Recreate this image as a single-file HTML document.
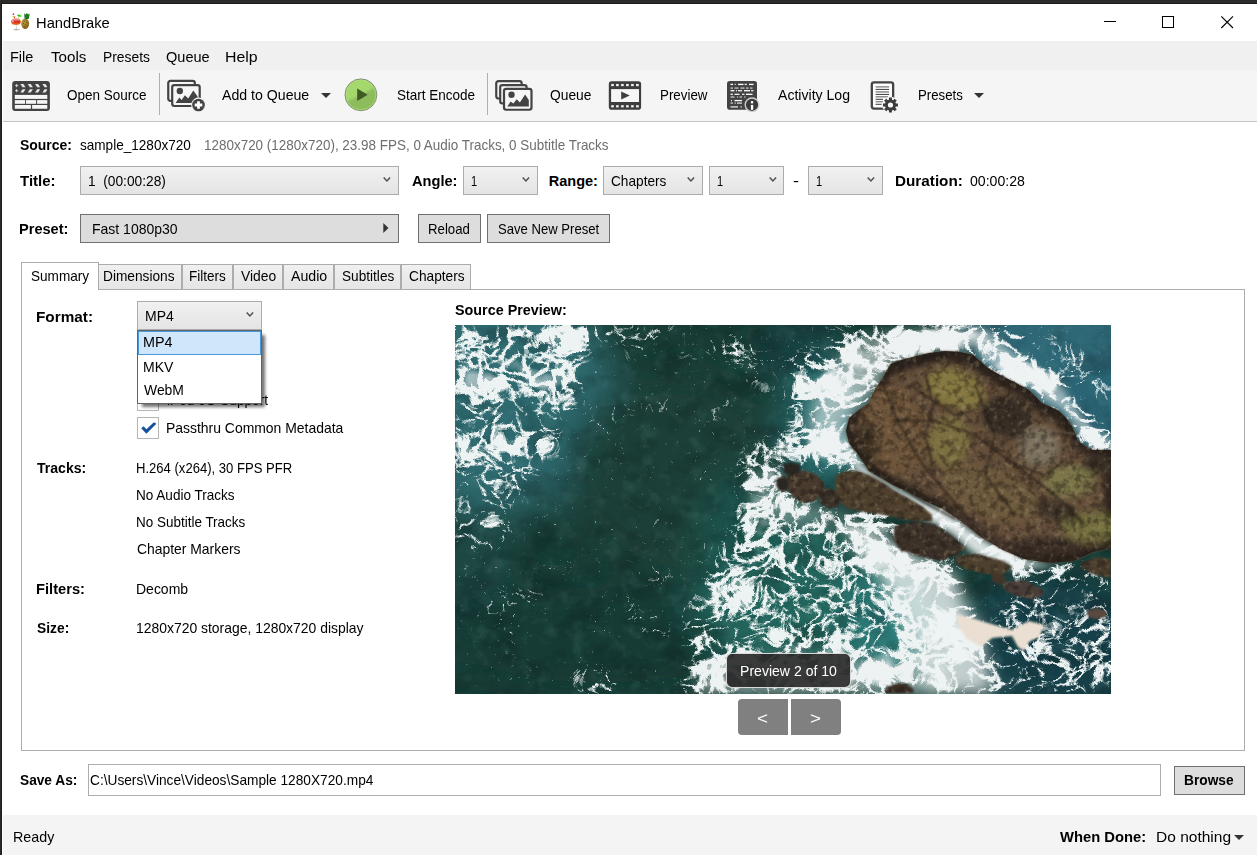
<!DOCTYPE html>
<html lang="en"><head><meta charset="utf-8"><title>HandBrake</title>
<style>
html,body{margin:0;padding:0;}
body{width:1257px;height:855px;overflow:hidden;background:#fff;font-family:"Liberation Sans",sans-serif;font-size:14.5px;color:#000;position:relative;}
.a{position:absolute;}
.t{position:absolute;white-space:nowrap;line-height:20px;transform-origin:0 50%;}
.combo{position:absolute;box-sizing:border-box;border:1px solid #acacac;background:linear-gradient(#f1f1f1,#e4e4e4);}
.btn{position:absolute;box-sizing:border-box;border:1px solid #707070;background:#dddddd;}
.tab{position:absolute;box-sizing:border-box;border:1px solid #acacac;border-bottom:none;background:linear-gradient(#f0f0f0,#e5e5e5);top:264px;height:25px;}
svg{position:absolute;overflow:visible;}
</style></head>
<body>
<div class="a" style="left:0;top:0;width:1257px;height:3px;background:#2b2a28"></div>
<div class="a" style="left:1px;top:3px;width:1256px;height:1px;background:#1c1b1a"></div>
<div class="a" style="left:0;top:0;width:1px;height:855px;background:#2b2a28"></div>
<div class="a" style="left:1px;top:3px;width:1px;height:852px;background:#1c1b1a"></div>
<div class="a" style="left:3px;top:41px;width:1254px;height:29px;background:#f0f0f0"></div>
<div class="a" style="left:3px;top:70px;width:1254px;height:51px;background:#f5f5f5"></div>
<div class="a" style="left:3px;top:121px;width:1254px;height:1px;background:#c4c4c4"></div>
<div class="a" style="left:3px;top:815px;width:1254px;height:40px;background:#f4f4f4"></div>
<svg style="left:10px;top:12px" width="22" height="20" viewBox="0 0 22 20">
<defs><linearGradient id="lgc" x1="0" y1="0" x2="0" y2="1"><stop offset="0" stop-color="#d9463a"/><stop offset="0.55" stop-color="#d8281c"/><stop offset="1" stop-color="#f08a1c"/></linearGradient>
<radialGradient id="lgp" cx="0.4" cy="0.4" r="0.7"><stop offset="0" stop-color="#c09a3a"/><stop offset="1" stop-color="#7d5a17"/></radialGradient></defs>
<ellipse cx="6.6" cy="17.6" rx="3.4" ry="0.9" fill="#c9c9c9"/>
<ellipse cx="6.3" cy="17.5" rx="1.1" ry="0.4" fill="#7a7a7a"/>
<rect x="6" y="12.6" width="0.9" height="4.8" fill="#d6d6d6"/>
<ellipse cx="6" cy="9.75" rx="4.75" ry="3.3" fill="url(#lgc)"/>
<ellipse cx="6" cy="7.6" rx="4.2" ry="1" fill="#e9b9b4" opacity="0.7"/>
<ellipse cx="2.9" cy="9.3" rx="0.9" ry="1.4" fill="#fff" opacity="0.55"/>
<rect x="8.2" y="5" width="0.5" height="2.6" fill="#d8b45a"/>
<ellipse cx="9.3" cy="3.7" rx="2.3" ry="1" fill="#2fcf10" transform="rotate(14 9.3 3.7)"/>
<ellipse cx="3.9" cy="4.35" rx="1.9" ry="0.65" fill="#cfcf58"/>
<circle cx="4.4" cy="5.5" r="0.65" fill="#d8241c"/>
<circle cx="3.4" cy="2.2" r="0.85" fill="#e820b8"/>
<circle cx="10.4" cy="8.6" r="0.7" fill="#f2d820"/>
<ellipse cx="15.2" cy="11.7" rx="3.9" ry="5.2" fill="url(#lgp)"/>
<g fill="#5e4210"><circle cx="14.4" cy="9.3" r="0.5"/><circle cx="16.4" cy="10.4" r="0.5"/><circle cx="13.6" cy="11.6" r="0.5"/><circle cx="15.4" cy="12.6" r="0.5"/><circle cx="14.4" cy="14.4" r="0.5"/><circle cx="16.6" cy="13.9" r="0.45"/><circle cx="15.5" cy="15.4" r="0.4"/></g>
<polygon points="14.50,6.60 14.20,1.20 15.65,2.70 16.20,0.90 17.30,2.20 18.10,0.90 18.50,2.60 19.80,1.90 18.70,6.90 16.50,7.30" fill="#1f7a1f"/>
</svg>
<span class="t" style="left:35.77px;top:12.55px;font-size:15px;transform:scaleX(0.9819);">HandBrake</span>
<svg style="left:1104px;top:21px" width="13" height="2" viewBox="0 0 13 2"><rect x="0" y="0" width="12" height="1" fill="#000"/></svg>
<svg style="left:1162px;top:16px" width="13" height="13" viewBox="0 0 13 13"><rect x="0.5" y="0.5" width="11" height="11" fill="none" stroke="#000" stroke-width="1"/></svg>
<svg style="left:1221px;top:16px" width="13" height="13" viewBox="0 0 13 13"><path d="M0.3 0.3 L12 12 M12 0.3 L0.3 12" fill="none" stroke="#000" stroke-width="1.1"/></svg>
<span class="t" style="left:10.29px;top:46.55px;font-size:15px;transform:scaleX(0.9663);">File</span>
<span class="t" style="left:50.92px;top:46.55px;font-size:15px;transform:scaleX(1.0110);">Tools</span>
<span class="t" style="left:102.65px;top:46.55px;font-size:15px;transform:scaleX(0.9224);">Presets</span>
<span class="t" style="left:165.77px;top:46.55px;font-size:15px;transform:scaleX(0.9696);">Queue</span>
<span class="t" style="left:225.48px;top:46.55px;font-size:15px;transform:scaleX(1.0586);">Help</span>
<svg style="left:12px;top:80px" width="38" height="31" viewBox="0 0 38 31">
<clipPath id="cc"><rect x="2.8" y="2" width="32.5" height="12"/></clipPath>
<rect x="0.2" y="0.9" width="37.7" height="30" rx="3" fill="#434343"/>
<g fill="#f6f6f6"><rect x="2.8" y="14.9" width="32.5" height="4"/>
<rect x="2.8" y="20.1" width="10.3" height="3.7"/><rect x="14" y="20.1" width="10.1" height="3.7"/><rect x="25.1" y="20.1" width="10.2" height="3.7"/>
<rect x="2.8" y="25" width="16.1" height="3.75"/><rect x="20.1" y="25" width="15.2" height="3.75"/>
<g clip-path="url(#cc)" opacity="0.92"><polygon points="8.40,3.95 11.40,3.95 13.50,7.2 10.50,7.2"/><polygon points="10.50,9.3 13.50,9.3 11.40,12.4 8.40,12.4"/><polygon points="15.75,3.95 18.75,3.95 20.85,7.2 17.85,7.2"/><polygon points="17.85,9.3 20.85,9.3 18.75,12.4 15.75,12.4"/><polygon points="23.10,3.95 26.10,3.95 28.20,7.2 25.20,7.2"/><polygon points="25.20,9.3 28.20,9.3 26.10,12.4 23.10,12.4"/><polygon points="30.45,3.95 33.45,3.95 35.55,7.2 32.55,7.2"/><polygon points="32.55,9.3 35.55,9.3 33.45,12.4 30.45,12.4"/></g>
<path d="M4.65 4 V7.2 M3.05 5.6 H6.25 M4.65 9.1 V12.3 M3.05 10.7 H6.25" stroke="#f6f6f6" stroke-width="0.9" fill="none" opacity="0.85"/></g>
</svg>
<span class="t" style="left:66.92px;top:84.97px;font-size:14.5px;transform:scaleX(0.9308);">Open Source</span>
<div class="a" style="left:159px;top:73px;width:1px;height:42px;background:#a9b2ba"></div>
<svg style="left:166px;top:79px" width="40" height="33" viewBox="0 0 40 33">
<rect x="2.25" y="1.85" width="26.55" height="20.05" rx="2.2" fill="#f6f6f6" stroke="#434343" stroke-width="2.2"/>
<rect x="6.20" y="6.05" width="27.50" height="20.95" rx="2.2" fill="#f6f6f6" stroke="#434343" stroke-width="2.2"/>
<circle cx="13.80" cy="12.00" r="3.2" fill="#434343"/>
<polygon points="9.60,24.10 13.30,18.50 15.60,20.90 18.90,16.20 22.20,19.50 27.30,11.50 31.60,17.60 31.60,24.10" fill="#434343"/>
<circle cx="32.50" cy="26.00" r="7.4" fill="#f0f0f0"/>
<circle cx="32.50" cy="26.00" r="6.3" fill="#434343"/>
<path d="M32.50 22.20 V29.80 M28.70 26.00 H36.30" stroke="#fff" stroke-width="2.8" fill="none"/>
</svg>
<span class="t" style="left:222.38px;top:84.97px;font-size:14.5px;transform:scaleX(0.9746);">Add to Queue</span>
<svg style="left:321px;top:93px" width="10" height="5" viewBox="0 0 10 5"><path d="M0 0 H10 L5.0 5 Z" fill="#333"/></svg>
<svg style="left:344px;top:78px" width="34" height="34" viewBox="0 0 34 34">
<defs><clipPath id="pcl"><circle cx="16.9" cy="16.8" r="15.4"/></clipPath><filter id="pbl" x="-20%" y="-20%" width="140%" height="140%"><feGaussianBlur stdDeviation="0.8"/></filter></defs>
<circle cx="16.9" cy="16.8" r="15.9" fill="#a4d86d" stroke="#7d8a76" stroke-width="1"/>
<g clip-path="url(#pcl)"><polygon points="-2,26 36,7 36,36 -2,36" fill="#8cbc5c" filter="url(#pbl)"/></g>
<circle cx="16.9" cy="16.8" r="14.9" fill="none" stroke="#b4e284" stroke-width="0.8" opacity="0.7"/>
<polygon points="13.2,10.5 23.7,16.8 13.2,23.1" fill="#3f5a25"/>
</svg>
<span class="t" style="left:396.67px;top:84.97px;font-size:14.5px;transform:scaleX(0.9303);">Start Encode</span>
<div class="a" style="left:487px;top:73px;width:1px;height:42px;background:#a9b2ba"></div>
<svg style="left:494px;top:79px" width="40" height="33" viewBox="0 0 40 33">
<rect x="2.25" y="2.10" width="25.40" height="17.40" rx="2.2" fill="#f6f6f6" stroke="#434343" stroke-width="2.2"/>
<rect x="6.20" y="6.05" width="26.40" height="18.35" rx="2.2" fill="#f6f6f6" stroke="#434343" stroke-width="2.2"/>
<rect x="10.00" y="9.80" width="27.50" height="20.95" rx="2.2" fill="#f6f6f6" stroke="#434343" stroke-width="2.2"/>
<circle cx="17.50" cy="15.70" r="3.2" fill="#434343"/>
<polygon points="13.30,27.60 16.60,22.50 19.40,24.60 22.70,20.20 25.90,23.40 31.10,15.50 34.80,20.90 34.80,27.60" fill="#434343"/>
</svg>
<span class="t" style="left:550.15px;top:84.97px;font-size:14.5px;transform:scaleX(0.9527);">Queue</span>
<svg style="left:608px;top:80px" width="34" height="31" viewBox="0 0 34 31">
<rect x="0.8" y="1.15" width="32.3" height="28.6" rx="2.8" fill="#3e3e3e"/>
<g fill="#f6f6f6"><rect x="3.1" y="9.1" width="27.9" height="12.9"/><rect x="3.20" y="3.95" width="2.6" height="2.2"/><rect x="3.20" y="25.20" width="2.6" height="2.2"/><rect x="8.10" y="3.95" width="2.6" height="2.2"/><rect x="8.10" y="25.20" width="2.6" height="2.2"/><rect x="13.10" y="3.95" width="2.6" height="2.2"/><rect x="13.10" y="25.20" width="2.6" height="2.2"/><rect x="18.10" y="3.95" width="2.6" height="2.2"/><rect x="18.10" y="25.20" width="2.6" height="2.2"/><rect x="23.10" y="3.95" width="2.6" height="2.2"/><rect x="23.10" y="25.20" width="2.6" height="2.2"/><rect x="28.10" y="3.95" width="2.6" height="2.2"/><rect x="28.10" y="25.20" width="2.6" height="2.2"/></g>
<polygon points="13.2,11.4 21.8,15.4 13.2,19.6" fill="#3e3e3e"/>
</svg>
<span class="t" style="left:660.46px;top:84.97px;font-size:14.5px;transform:scaleX(0.9208);">Preview</span>
<svg style="left:726px;top:80px" width="34" height="32" viewBox="0 0 34 32">
<rect x="1" y="0.9" width="30" height="28.8" rx="2.8" fill="#434343"/>
<g fill="#fff"><rect x="4.50" y="3.75" width="2.50" height="1.3" opacity="1"/><rect x="8.50" y="3.75" width="1.50" height="1.3" opacity="0.6"/><rect x="12.00" y="3.75" width="5.50" height="1.3" opacity="1"/><rect x="18.50" y="3.75" width="2.50" height="1.3" opacity="0.8"/><rect x="23.00" y="3.75" width="4.50" height="1.3" opacity="1"/><rect x="4.50" y="7.45" width="2.50" height="1.3" opacity="0.7"/><rect x="8.50" y="7.45" width="4.00" height="1.3" opacity="0.7"/><rect x="14.50" y="7.45" width="4.00" height="1.3" opacity="0.7"/><rect x="20.00" y="7.45" width="2.50" height="1.3" opacity="0.7"/><rect x="24.00" y="7.45" width="2.50" height="1.3" opacity="0.7"/><rect x="4.50" y="10.05" width="4.00" height="1.3" opacity="1"/><rect x="10.00" y="10.05" width="1.00" height="1.3" opacity="0.9"/><rect x="12.00" y="10.05" width="4.00" height="1.3" opacity="0.9"/><rect x="18.00" y="10.05" width="6.00" height="1.3" opacity="1"/><rect x="25.00" y="10.05" width="2.50" height="1.3" opacity="0.9"/><rect x="4.50" y="13.65" width="2.50" height="1.3" opacity="0.9"/><rect x="8.50" y="13.65" width="5.00" height="1.3" opacity="0.9"/><rect x="16.00" y="13.65" width="2.50" height="1.3" opacity="0.9"/><rect x="20.00" y="13.65" width="6.50" height="1.3" opacity="1"/><rect x="4.50" y="16.35" width="4.00" height="1.3" opacity="0.7"/><rect x="11.00" y="16.35" width="1.00" height="1.3" opacity="0.7"/><rect x="13.50" y="16.35" width="2.50" height="1.3" opacity="0.7"/><rect x="18.00" y="16.35" width="1.50" height="1.3" opacity="0.6"/><rect x="5.00" y="19.95" width="1.00" height="1.3" opacity="0.9"/><rect x="8.50" y="19.95" width="7.50" height="1.3" opacity="1"/><rect x="4.50" y="22.45" width="2.50" height="1.3" opacity="0.7"/><rect x="8.50" y="22.45" width="1.50" height="1.3" opacity="0.6"/><rect x="11.00" y="22.45" width="5.00" height="1.3" opacity="0.8"/><rect x="4.50" y="26.25" width="7.50" height="1.3" opacity="0.85"/><rect x="14.50" y="26.25" width="1.30" height="1.3" opacity="0.8"/></g>
<circle cx="26" cy="24.8" r="7.5" fill="#cfcfcf"/>
<circle cx="26" cy="24.8" r="6.1" fill="#3a3a3a"/>
<rect x="24.9" y="21.1" width="2.3" height="2.3" fill="#fff"/><rect x="24.9" y="24.9" width="2.3" height="4.9" fill="#fff"/>
</svg>
<span class="t" style="left:778.38px;top:84.97px;font-size:14.5px;transform:scaleX(0.9709);">Activity Log</span>
<svg style="left:870px;top:80px" width="30" height="34" viewBox="0 0 30 34">
<rect x="1.80" y="2.30" width="21.35" height="26.25" rx="2.2" fill="#fdfdfd" stroke="#434343" stroke-width="2.3"/>
<rect x="5.60" y="6.10" width="13.50" height="1.5" fill="#8d8d8d"/><rect x="5.60" y="8.90" width="13.50" height="1.0" fill="#3a3a3a"/><rect x="5.60" y="11.15" width="13.50" height="1.5" fill="#8d8d8d"/><rect x="5.60" y="13.90" width="13.50" height="1.0" fill="#3a3a3a"/><rect x="5.60" y="16.05" width="12.40" height="1.5" fill="#8d8d8d"/><rect x="5.60" y="18.80" width="7.40" height="1.0" fill="#3a3a3a"/><rect x="5.60" y="20.95" width="7.40" height="1.5" fill="#8d8d8d"/><rect x="5.60" y="23.80" width="6.00" height="1.0" fill="#3a3a3a"/>
<circle cx="20.45" cy="25.00" r="8.3" fill="#f5f5f5"/>
<g fill="#3c3c3c"><circle cx="20.45" cy="25.00" r="5.6"/><rect x="18.95" y="17.50" width="3" height="4" transform="rotate(0 20.45 25.00)"/><rect x="18.95" y="17.50" width="3" height="4" transform="rotate(45 20.45 25.00)"/><rect x="18.95" y="17.50" width="3" height="4" transform="rotate(90 20.45 25.00)"/><rect x="18.95" y="17.50" width="3" height="4" transform="rotate(135 20.45 25.00)"/><rect x="18.95" y="17.50" width="3" height="4" transform="rotate(180 20.45 25.00)"/><rect x="18.95" y="17.50" width="3" height="4" transform="rotate(225 20.45 25.00)"/><rect x="18.95" y="17.50" width="3" height="4" transform="rotate(270 20.45 25.00)"/><rect x="18.95" y="17.50" width="3" height="4" transform="rotate(315 20.45 25.00)"/></g>
<circle cx="20.45" cy="25.00" r="2.6" fill="#fafafa"/>
</svg>
<span class="t" style="left:918.37px;top:84.97px;font-size:14.5px;transform:scaleX(0.9116);">Presets</span>
<svg style="left:974px;top:93px" width="10" height="5" viewBox="0 0 10 5"><path d="M0 0 H10 L5.0 5 Z" fill="#333"/></svg>
<span class="t" style="left:20.14px;top:134.97px;font-size:14.5px;transform:scaleX(0.9617);font-weight:700;">Source:</span>
<span class="t" style="left:80.15px;top:134.97px;font-size:14.5px;transform:scaleX(0.9352);">sample_1280x720</span>
<span class="t" style="left:204.46px;top:134.97px;font-size:14.5px;transform:scaleX(0.9277);color:#6e6e6e;">1280x720 (1280x720), 23.98 FPS, 0 Audio Tracks, 0 Subtitle Tracks</span>
<span class="t" style="left:20.37px;top:170.72px;font-size:14.5px;transform:scaleX(1.0342);font-weight:700;">Title:</span>
<div class="combo" style="left:80px;top:166px;width:319px;height:29px"></div>
<span class="t" style="left:88.43px;top:170.72px;font-size:14.5px;transform:scaleX(0.9470);white-space:pre;">1  (00:00:28)</span>
<svg style="left:383.1px;top:177px" width="9" height="6" viewBox="0 0 9 6"><path d="M0.7 0.6 L3.9 4.0 L7.1 0.6" fill="none" stroke="#505050" stroke-width="1.5"/></svg>
<span class="t" style="left:411.62px;top:170.72px;font-size:14.5px;transform:scaleX(1.0086);font-weight:700;">Angle:</span>
<div class="combo" style="left:463px;top:166px;width:75px;height:29px"></div>
<span class="t" style="left:471.39px;top:170.72px;font-size:14.5px;transform:scaleX(0.7600);">1</span>
<svg style="left:521.9px;top:177px" width="9" height="6" viewBox="0 0 9 6"><path d="M0.7 0.6 L3.9 4.0 L7.1 0.6" fill="none" stroke="#505050" stroke-width="1.5"/></svg>
<span class="t" style="left:548.75px;top:170.72px;font-size:14.5px;transform:scaleX(1.0000);font-weight:700;">Range:</span>
<div class="combo" style="left:603px;top:166px;width:100px;height:29px"></div>
<span class="t" style="left:610.54px;top:170.72px;font-size:14.5px;transform:scaleX(0.9414);">Chapters</span>
<svg style="left:686.6px;top:177px" width="9" height="6" viewBox="0 0 9 6"><path d="M0.7 0.6 L3.9 4.0 L7.1 0.6" fill="none" stroke="#505050" stroke-width="1.5"/></svg>
<div class="combo" style="left:709px;top:166px;width:75px;height:29px"></div>
<span class="t" style="left:717.39px;top:170.72px;font-size:14.5px;transform:scaleX(0.7600);">1</span>
<svg style="left:768.6px;top:177px" width="9" height="6" viewBox="0 0 9 6"><path d="M0.7 0.6 L3.9 4.0 L7.1 0.6" fill="none" stroke="#505050" stroke-width="1.5"/></svg>
<span class="t" style="left:792.97px;top:170.72px;font-size:14.5px;transform:scaleX(1.2414);">-</span>
<div class="combo" style="left:808px;top:166px;width:75px;height:29px"></div>
<span class="t" style="left:816.39px;top:170.72px;font-size:14.5px;transform:scaleX(0.7600);">1</span>
<svg style="left:867.3000000000001px;top:177px" width="9" height="6" viewBox="0 0 9 6"><path d="M0.7 0.6 L3.9 4.0 L7.1 0.6" fill="none" stroke="#505050" stroke-width="1.5"/></svg>
<span class="t" style="left:894.65px;top:170.72px;font-size:14.5px;transform:scaleX(1.0532);font-weight:700;">Duration:</span>
<span class="t" style="left:970.41px;top:170.72px;font-size:14.5px;transform:scaleX(0.9734);">00:00:28</span>
<span class="t" style="left:19.49px;top:218.72px;font-size:14.5px;transform:scaleX(1.0053);font-weight:700;">Preset:</span>
<div class="btn" style="left:80px;top:214px;width:319px;height:29px"></div>
<span class="t" style="left:92.41px;top:218.72px;font-size:14.5px;transform:scaleX(0.9655);">Fast 1080p30</span>
<svg style="left:383px;top:223px" width="6" height="10" viewBox="0 0 6 10"><path d="M0.3 0 L5.5 5 L0.3 10 Z" fill="#333"/></svg>
<div class="btn" style="left:418px;top:214px;width:63px;height:29px"></div>
<span class="t" style="left:428.47px;top:218.72px;font-size:14.5px;transform:scaleX(0.9117);">Reload</span>
<div class="btn" style="left:487px;top:214px;width:123px;height:29px"></div>
<span class="t" style="left:497.94px;top:218.72px;font-size:14.5px;transform:scaleX(0.9034);">Save New Preset</span>
<div class="a" style="left:21px;top:289px;width:1224px;height:462px;box-sizing:border-box;border:1px solid #acacac;background:#fff"></div>
<div class="tab" style="left:97px;width:85px"></div>
<span class="t" style="left:103.44px;top:266.22px;font-size:14.5px;transform:scaleX(0.9444);">Dimensions</span>
<div class="tab" style="left:182px;width:51px"></div>
<span class="t" style="left:189.45px;top:266.22px;font-size:14.5px;transform:scaleX(0.9307);">Filters</span>
<div class="tab" style="left:233px;width:50px"></div>
<span class="t" style="left:241.13px;top:266.22px;font-size:14.5px;transform:scaleX(0.9550);">Video</span>
<div class="tab" style="left:283px;width:51px"></div>
<span class="t" style="left:291.13px;top:266.22px;font-size:14.5px;transform:scaleX(0.9759);">Audio</span>
<div class="tab" style="left:334px;width:67px"></div>
<span class="t" style="left:341.91px;top:266.22px;font-size:14.5px;transform:scaleX(0.9404);">Subtitles</span>
<div class="tab" style="left:401px;width:70px"></div>
<span class="t" style="left:408.54px;top:266.22px;font-size:14.5px;transform:scaleX(0.9458);">Chapters</span>
<div class="a" style="left:21px;top:262px;width:78px;height:28px;box-sizing:border-box;border:1px solid #acacac;border-bottom:none;background:#fff"></div>
<span class="t" style="left:30.66px;top:266.22px;font-size:14.5px;transform:scaleX(0.9369);">Summary</span>
<span class="t" style="left:36.44px;top:306.97px;font-size:14.5px;transform:scaleX(1.0557);font-weight:700;">Format:</span>
<div class="combo" style="left:137px;top:301px;width:125px;height:29px"></div>
<span class="t" style="left:144.66px;top:306.22px;font-size:14.5px;transform:scaleX(0.9646);">MP4</span>
<svg style="left:246.29999999999998px;top:312.3px" width="9" height="6" viewBox="0 0 9 6"><path d="M0.7 0.6 L3.9 4.0 L7.1 0.6" fill="none" stroke="#505050" stroke-width="1.5"/></svg>
<div class="a" style="left:137px;top:389px;width:22px;height:22px;box-sizing:border-box;border:1px solid #b5b5b5;background:#fff"></div>
<span class="t" style="left:166.56px;top:390.47px;font-size:14.5px;transform:scaleX(0.9423);">iPod 5G Support</span>
<div class="a" style="left:137px;top:330px;width:125px;height:74px;box-sizing:border-box;border:1px solid #646464;background:#fff;box-shadow:4px 4px 3px -1px rgba(0,0,0,0.55)"></div>
<div class="a" style="left:138px;top:331px;width:123px;height:24px;box-sizing:border-box;border:1px solid #4a98e0;background:#cfe6fb"></div>
<span class="t" style="left:143.38px;top:332.47px;font-size:14.5px;transform:scaleX(0.9912);">MP4</span>
<span class="t" style="left:143.41px;top:356.72px;font-size:14.5px;transform:scaleX(0.9669);">MKV</span>
<span class="t" style="left:144.38px;top:380.47px;font-size:14.5px;transform:scaleX(0.9598);">WebM</span>
<div class="a" style="left:137px;top:417px;width:22px;height:22px;box-sizing:border-box;border:1px solid #b5b5b5;background:#fff"></div>
<svg style="left:141px;top:422px" width="16" height="12" viewBox="0 0 16 12"><path d="M0.2 6.3 L5.4 11.7 L15.4 1.7 L12.9 0.2 L5.4 7.2 L2.6 4.2 Z" fill="#14539c"/></svg>
<span class="t" style="left:166.42px;top:418.22px;font-size:14.5px;transform:scaleX(0.9605);">Passthru Common Metadata</span>
<span class="t" style="left:36.88px;top:458.17px;font-size:14.5px;transform:scaleX(0.9706);font-weight:700;">Tracks:</span>
<span class="t" style="left:136.49px;top:458.17px;font-size:14.5px;transform:scaleX(0.9015);">H.264 (x264), 30 FPS PFR</span>
<span class="t" style="left:136.45px;top:485.27px;font-size:14.5px;transform:scaleX(0.9343);">No Audio Tracks</span>
<span class="t" style="left:136.45px;top:512.37px;font-size:14.5px;transform:scaleX(0.9290);">No Subtitle Tracks</span>
<span class="t" style="left:136.78px;top:539.17px;font-size:14.5px;transform:scaleX(0.9583);">Chapter Markers</span>
<span class="t" style="left:35.99px;top:579.17px;font-size:14.5px;transform:scaleX(1.0130);font-weight:700;">Filters:</span>
<span class="t" style="left:136.41px;top:579.17px;font-size:14.5px;transform:scaleX(0.9646);">Decomb</span>
<span class="t" style="left:36.64px;top:617.77px;font-size:14.5px;transform:scaleX(0.9525);font-weight:700;">Size:</span>
<span class="t" style="left:136.42px;top:617.77px;font-size:14.5px;transform:scaleX(0.9598);">1280x720 storage, 1280x720 display</span>
<span class="t" style="left:454.63px;top:299.97px;font-size:14.5px;transform:scaleX(0.9899);font-weight:700;">Source Preview:</span>
<svg style="left:455px;top:325px" width="656" height="369" viewBox="0 0 656 369">
<defs>
<clipPath id="pc"><rect x="0" y="0" width="656" height="369"/></clipPath>
<filter id="b20" x="-30%" y="-30%" width="160%" height="160%"><feGaussianBlur stdDeviation="18"/></filter>
<filter id="b10" x="-30%" y="-30%" width="160%" height="160%"><feGaussianBlur stdDeviation="8"/></filter>
<filter id="b4" x="-30%" y="-30%" width="160%" height="160%"><feGaussianBlur stdDeviation="3.5"/></filter>
<filter id="b2" x="-10%" y="-10%" width="120%" height="120%"><feGaussianBlur stdDeviation="1.3"/></filter>
<filter id="foam" filterUnits="userSpaceOnUse" x="-50" y="-50" width="756" height="469" color-interpolation-filters="sRGB">
  <feGaussianBlur in="SourceAlpha" stdDeviation="6" result="d"/>
  <feTurbulence type="fractalNoise" baseFrequency="0.022 0.028" numOctaves="3" seed="2" result="lo"/>
  <feColorMatrix in="lo" type="matrix" values="0 0 0 0 0  0 0 0 0 0  0 0 0 0 0  1.8 0 0 0 -0.4" result="m"/>
  <feComposite in="d" in2="m" operator="arithmetic" k1="0.8" k2="0.5" k3="0" k4="0" result="dm"/>
  <feTurbulence type="turbulence" baseFrequency="0.07 0.085" numOctaves="5" seed="4" result="n0"/>
  <feTurbulence type="fractalNoise" baseFrequency="0.03" numOctaves="2" seed="31" result="wp"/>
  <feDisplacementMap in="n0" in2="wp" scale="26" xChannelSelector="R" yChannelSelector="G" result="n"/>
  <feColorMatrix in="n" type="matrix" values="0 0 0 0 0  0 0 0 0 0  0 0 0 0 0  -2.1 0 0 0 1" result="na"/>
  <feComposite in="dm" in2="na" operator="arithmetic" k1="0" k2="1.5" k3="1" k4="-1.0" result="c"/>
  <feComponentTransfer in="c" result="c2"><feFuncA type="linear" slope="2.6" intercept="0"/></feComponentTransfer>
  <feColorMatrix in="c2" type="matrix" values="0 0 0 0 0.93  0 0 0 0 0.95  0 0 0 0 0.95  0 0 0 1 0" result="c3"/>
  <feGaussianBlur in="c3" stdDeviation="0.4"/>
</filter>
<filter id="wtex" filterUnits="userSpaceOnUse" x="0" y="0" width="656" height="369" color-interpolation-filters="sRGB">
  <feTurbulence type="fractalNoise" baseFrequency="0.03 0.04" numOctaves="4" seed="11" result="n"/>
  <feColorMatrix in="n" type="matrix" values="0 0 0 0 0.03  0 0 0 0 0.08  0 0 0 0 0.08  -3.2 0 0 0 1.75"/>
</filter>
<filter id="wtex2" filterUnits="userSpaceOnUse" x="0" y="0" width="656" height="369" color-interpolation-filters="sRGB">
  <feTurbulence type="fractalNoise" baseFrequency="0.06" numOctaves="3" seed="23" result="n"/>
  <feColorMatrix in="n" type="matrix" values="0 0 0 0 0.40  0 0 0 0 0.62  0 0 0 0 0.60  3 0 0 0 -1.55"/>
</filter>
<filter id="rtex" filterUnits="userSpaceOnUse" x="300" y="20" width="356" height="348" color-interpolation-filters="sRGB">
  <feTurbulence type="fractalNoise" baseFrequency="0.14" numOctaves="4" seed="5" result="n"/>
  <feColorMatrix in="n" type="matrix" values="0 0 0 0 0.10  0 0 0 0 0.08  0 0 0 0 0.06  -4 0 0 0 2.25" result="dk"/>
  <feComposite in="dk" in2="SourceAlpha" operator="in"/>
</filter>
<filter id="rtexl" filterUnits="userSpaceOnUse" x="300" y="20" width="356" height="348" color-interpolation-filters="sRGB">
  <feTurbulence type="fractalNoise" baseFrequency="0.16" numOctaves="3" seed="9" result="n"/>
  <feColorMatrix in="n" type="matrix" values="0 0 0 0 0.66  0 0 0 0 0.60  0 0 0 0 0.45  3.5 0 0 0 -1.9" result="lt"/>
  <feComposite in="lt" in2="SourceAlpha" operator="in"/>
</filter>
</defs>
<g clip-path="url(#pc)">
<rect width="656" height="369" fill="#183c35"/>
<g filter="url(#b20)">
<ellipse cx="40" cy="70" rx="120" ry="120" fill="#2f6b70"/>
<ellipse cx="10" cy="270" rx="60" ry="80" fill="#1c4743"/>
<ellipse cx="220" cy="150" rx="110" ry="100" fill="#1a4038"/>
<ellipse cx="150" cy="310" rx="170" ry="60" fill="#173b35"/>
<ellipse cx="610" cy="30" rx="110" ry="80" fill="#2f6877"/>
<ellipse cx="656" cy="90" rx="50" ry="50" fill="#2b6473"/>
<ellipse cx="345" cy="25" rx="45" ry="40" fill="#143e3e"/>
<ellipse cx="600" cy="320" rx="100" ry="70" fill="#153f4a"/>
<ellipse cx="330" cy="270" rx="90" ry="80" fill="#24655c"/>
<ellipse cx="290" cy="200" rx="40" ry="50" fill="#1f574f"/>
<ellipse cx="440" cy="300" rx="50" ry="60" fill="#2a7a78"/>
<ellipse cx="370" cy="100" rx="40" ry="70" fill="#2a6f72"/>
</g>
<rect width="656" height="369" filter="url(#wtex)" opacity="0.24"/>
<rect width="656" height="369" filter="url(#wtex2)" opacity="0.15"/>
<g filter="url(#foam)">
<rect x="0" y="0" width="656" height="369" fill="#fff" fill-opacity="0.13"/>
<polygon points="0,0 140,0 130,40 125,70 108,100 100,125 80,150 60,175 40,190 0,190" fill="#fff" fill-opacity="0.42"/>
<polygon points="0,0 135,0 125,25 100,35 115,55 105,75 95,95 75,100 70,120 50,130 30,140 0,150" fill="#fff" fill-opacity="0.27"/>
<polygon points="0,0 28,0 22,18 0,24" fill="#fff" fill-opacity="0.7"/>
<polygon points="88,0 136,0 128,22 110,30 95,22" fill="#fff" fill-opacity="0.6"/>
<polygon points="135,0 222,0 240,6 215,13 180,12 150,14" fill="#fff" fill-opacity="0.45"/>
<ellipse cx="192" cy="24" rx="14" ry="8" fill="#fff" fill-opacity="0.25"/>
<ellipse cx="170" cy="86" rx="45" ry="7" transform="rotate(-12 170 86)" fill="#fff" fill-opacity="0.28"/>
<polygon points="0,195 40,192 52,205 45,222 25,226 0,222" fill="#fff" fill-opacity="0.45"/>
<ellipse cx="55" cy="275" rx="30" ry="10" transform="rotate(-25 55 275)" fill="#fff" fill-opacity="0.26"/>
<ellipse cx="70" cy="300" rx="30" ry="6" transform="rotate(-15 70 300)" fill="#fff" fill-opacity="0.22"/>
<polygon points="112,338 135,340 160,360 165,368 120,368" fill="#fff" fill-opacity="0.5"/>
<ellipse cx="185" cy="290" rx="40" ry="6" transform="rotate(35 185 290)" fill="#fff" fill-opacity="0.3"/>
<ellipse cx="205" cy="250" rx="20" ry="5" transform="rotate(10 205 250)" fill="#fff" fill-opacity="0.26"/>
<ellipse cx="285" cy="28" rx="35" ry="9" transform="rotate(15 285 28)" fill="#fff" fill-opacity="0.32"/>
<ellipse cx="300" cy="55" rx="30" ry="6" transform="rotate(40 300 55)" fill="#fff" fill-opacity="0.28"/>
<ellipse cx="270" cy="85" rx="22" ry="5" transform="rotate(-30 270 85)" fill="#fff" fill-opacity="0.26"/>
<ellipse cx="345" cy="8" rx="14" ry="4" transform="rotate(-35 345 8)" fill="#fff" fill-opacity="0.7"/>
<polygon points="341,54 360,39 384,19 405,9 440,6 522,0 525,24 500,26 470,28 440,38 427,54 414,78 394,93 391,112 401,129 414,146 388,150 358,140 328,138 323,159 341,177 371,184 289,184 285,164 287,138 293,125 323,112 336,95 332,73" fill="#fff" fill-opacity="0.45"/>
<polygon points="372,40 395,22 440,10 520,4 522,24 470,27 436,38 420,66 394,92 390,112 398,128 380,138 352,128 350,100 356,66" fill="#fff" fill-opacity="0.55"/>
<polygon points="330,40 370,0 440,0 440,10 400,12 370,30 345,55" fill="#fff" fill-opacity="0.3"/>
<polygon points="288,130 330,126 326,160 342,178 372,186 290,188 284,160" fill="#fff" fill-opacity="0.4"/>
<polygon points="512,0 534,2 556,22 580,38 606,54 626,80 640,100 656,106 656,128 640,124 624,114 616,98 604,84 588,76 574,63 556,54 534,42 520,28" fill="#fff" fill-opacity="0.8"/>
<polygon points="440,0 522,0 524,26 500,27 470,28 446,34 436,38" fill="#fff" fill-opacity="0.8"/>
<ellipse cx="600" cy="22" rx="55" ry="9" transform="rotate(22 600 22)" fill="#fff" fill-opacity="0.33"/>
<ellipse cx="640" cy="60" rx="30" ry="8" transform="rotate(30 640 60)" fill="#fff" fill-opacity="0.33"/>
<ellipse cx="565" cy="12" rx="25" ry="6" transform="rotate(20 565 12)" fill="#fff" fill-opacity="0.3"/>
<polygon points="280,184 440,184 440,200 470,232 501,240 511,270 526,296 531,322 544,348 548,368 227,368 240,330 231,300 231,281 252,259 274,216" fill="#fff" fill-opacity="0.44"/>
<polygon points="300,184 440,184 440,216 300,212" fill="#fff" fill-opacity="0.3"/>
<polygon points="381,190 440,205 470,232 501,240 511,270 526,296 531,322 544,348 548,368 450,368 446,330 430,290 410,250 392,220" fill="#fff" fill-opacity="0.42"/>
<polygon points="240,330 330,318 440,322 440,369 227,369" fill="#fff" fill-opacity="0.55"/>
<polygon points="470,182 490,184 507,198 526,213 548,226 569,235 560,240 540,234 520,224 500,210 482,198" fill="#fff" fill-opacity="1"/>
<polygon points="548,232 600,240 656,252 656,268 600,258 556,250" fill="#fff" fill-opacity="0.5"/>
<ellipse cx="558" cy="250" rx="12" ry="8" fill="#fff" fill-opacity="0.8"/>
<ellipse cx="607" cy="246" rx="9" ry="5" fill="#fff" fill-opacity="0.8"/>
<ellipse cx="600" cy="300" rx="60" ry="40" fill="#fff" fill-opacity="0.36"/>
<ellipse cx="595" cy="345" rx="65" ry="26" fill="#fff" fill-opacity="0.36"/>
<ellipse cx="640" cy="330" rx="20" ry="30" fill="#fff" fill-opacity="0.22"/>
<ellipse cx="280" cy="250" rx="30" ry="40" fill="#fff" fill-opacity="0.18"/>
</g>
<g filter="url(#b10)" fill="#eef2f2">
<polygon points="362,70 380,40 402,20 440,10 515,4 520,22 470,26 436,38 420,66 394,92 390,112 398,128 380,134 360,124 354,100" opacity="0.6"/>
<polygon points="390,196 430,212 470,236 500,250 510,280 524,300 530,330 540,368 470,368 462,330 446,292 424,250 400,222" opacity="0.8"/>
<polygon points="300,150 326,142 336,176 380,186 400,200 330,200 296,188" opacity="0.35"/>
<polygon points="250,345 330,332 420,336 470,345 470,369 240,369" opacity="0.5"/>
</g><g filter="url(#b4)" fill="#eef2f2">
<polygon points="440,168 470,180 490,184 507,198 526,213 548,226 569,235 600,240 560,244 536,238 516,226 498,210 478,198 455,186" opacity="0.9"/>
<polygon points="390,112 396,124 406,138 420,150 440,162 470,177 488,185 478,190 452,178 428,166 406,152 394,136 388,122" opacity="0.85"/>
<polygon points="515,2 534,6 556,26 580,42 604,58 622,84 636,106 656,112 656,126 640,122 626,112 618,98 606,84 590,76 576,63 558,54 536,42 522,26" opacity="0.55"/>
</g>
<g filter="url(#b2)"><polygon points="501,289 526,296 557,305 574,296 589,300 585,311 574,317 569,326 563,322 557,311 537,313 526,322 511,313 503,300" fill="#eadfd2"/></g>
<g filter="url(#b2)">
<polygon points="436,39 446,35 458,32 474,28 490,26 505,27 518,30 533,43 545,50 557,56 574,65 587,78 604,86 612,94 617,101 623,116 630,121 638,125 656,125 656,223 638,227 619,236 595,238 569,234 548,225 526,212 507,197 488,184 470,176 452,166 440,161 426,153 414,146 403,129 394,118 391,106 394,93 404,85 414,78 419,66 427,54 432,45" fill="#65503a"/>
<polygon points="625,238 643,232 656,234 656,253 638,249 628,244" fill="#4c3d2d"/>
<polygon points="332,150 340,145 352,146 362,150 369,158 368,168 360,176 348,178 338,172 332,162" fill="#4a3b2e"/>
<polygon points="328,140 336,137 345,140 345,148 337,151 329,148" fill="#2c2622"/>
<polygon points="322,153 330,151 334,158 332,166 324,166 321,160" fill="#2c2622"/>
<polygon points="364,166 374,163 384,168 384,181 374,184 365,178" fill="#3a302a"/>
<polygon points="381,150 392,146 403,146 416,151 430,159 440,166 455,174 468,182 477,190 477,196 463,196 447,194 430,190 410,187 392,183 384,176 380,164" fill="#503f2e"/>
<polygon points="440,201 458,197 479,199 496,210 511,223 503,229 486,236 464,231 445,225 438,214" fill="#3d312a"/>
<polygon points="501,231 522,229 548,236 557,242 548,249 531,249 511,244 501,238" fill="#4e3f2e"/>
<polygon points="537,249 548,249 551,256 545,260 537,256" fill="#43362c"/>
<polygon points="548,257 569,255 587,264 589,270 576,274 559,270 548,264" fill="#4a3c38"/>
<polygon points="632,286 642,283 651,286 651,292 641,294 633,292" fill="#5a4a40"/>
<polygon points="432,362 442,358 452,359 458,364 459,368 430,368" fill="#3a2f28"/>
</g>
<clipPath id="rc"><polygon points="436,39 446,35 458,32 474,28 490,26 505,27 518,30 533,43 545,50 557,56 574,65 587,78 604,86 612,94 617,101 623,116 630,121 638,125 656,125 656,223 638,227 619,236 595,238 569,234 548,225 526,212 507,197 488,184 470,176 452,166 440,161 426,153 414,146 403,129 394,118 391,106 394,93 404,85 414,78 419,66 427,54 432,45"/></clipPath>
<g clip-path="url(#rc)"><g filter="url(#b4)">
<polygon points="436,39 446,35 458,32 474,28 490,26 505,27 518,30 533,43 545,50 557,56 574,65 587,78 604,86 612,94 617,101 623,116 630,121 638,125 656,125 656,223 638,227 619,236 595,238 569,234 548,225 526,212 507,197 488,184 470,176 452,166 440,161 426,153 414,146 403,129 394,118 391,106 394,93 404,85 414,78 419,66 427,54 432,45" fill="none" stroke="#2c241d" stroke-width="14"/>
<polyline points="436,39 458,32 490,26 518,30 533,43 557,56 574,65 587,78 604,86 617,101" fill="none" stroke="#2a231d" stroke-width="20"/>
<ellipse cx="440" cy="105" rx="30" ry="45" fill="#6e543a" transform="rotate(-20 440 105)"/>
<ellipse cx="500" cy="64" rx="30" ry="19" fill="#857840" transform="rotate(20 500 64)"/>
<ellipse cx="494" cy="116" rx="21" ry="26" fill="#7d6f40" transform="rotate(10 494 116)"/>
<ellipse cx="552" cy="92" rx="26" ry="20" fill="#372f26" transform="rotate(25 552 92)"/>
<ellipse cx="584" cy="122" rx="20" ry="20" fill="#7c725e"/>
<ellipse cx="614" cy="156" rx="26" ry="16" fill="#7b764a"/>
<ellipse cx="636" cy="202" rx="30" ry="15" fill="#74703f"/>
<ellipse cx="412" cy="118" rx="10" ry="22" fill="#3a2e24"/>
<ellipse cx="535" cy="168" rx="52" ry="24" fill="#6e5a3d" transform="rotate(22 535 168)"/>
<ellipse cx="520" cy="207" rx="44" ry="9" fill="#40332a" transform="rotate(30 520 207)"/>
<ellipse cx="590" cy="222" rx="40" ry="10" fill="#3a2f26"/>
<ellipse cx="646" cy="140" rx="18" ry="10" fill="#3a3026"/>
<ellipse cx="600" cy="186" rx="24" ry="8" fill="#3a3026" transform="rotate(15 600 186)"/>
</g></g>
<g filter="url(#rtex)" opacity="0.38"><polygon points="436,39 446,35 458,32 474,28 490,26 505,27 518,30 533,43 545,50 557,56 574,65 587,78 604,86 612,94 617,101 623,116 630,121 638,125 656,125 656,223 638,227 619,236 595,238 569,234 548,225 526,212 507,197 488,184 470,176 452,166 440,161 426,153 414,146 403,129 394,118 391,106 394,93 404,85 414,78 419,66 427,54 432,45"/><polygon points="625,238 643,232 656,234 656,253 638,249 628,244"/><polygon points="332,150 340,145 352,146 362,150 369,158 368,168 360,176 348,178 338,172 332,162"/><polygon points="364,166 374,163 384,168 384,181 374,184 365,178"/><polygon points="381,150 392,146 403,146 416,151 430,159 440,166 455,174 468,182 477,190 477,196 463,196 447,194 430,190 410,187 392,183 384,176 380,164"/><polygon points="440,201 458,197 479,199 496,210 511,223 503,229 486,236 464,231 445,225 438,214"/><polygon points="501,231 522,229 548,236 557,242 548,249 531,249 511,244 501,238"/><polygon points="548,257 569,255 587,264 589,270 576,274 559,270 548,264"/><polygon points="432,362 442,358 452,359 458,364 459,368 430,368"/></g>
<g filter="url(#rtexl)" opacity="0.34"><polygon points="436,39 446,35 458,32 474,28 490,26 505,27 518,30 533,43 545,50 557,56 574,65 587,78 604,86 612,94 617,101 623,116 630,121 638,125 656,125 656,223 638,227 619,236 595,238 569,234 548,225 526,212 507,197 488,184 470,176 452,166 440,161 426,153 414,146 403,129 394,118 391,106 394,93 404,85 414,78 419,66 427,54 432,45"/><polygon points="625,238 643,232 656,234 656,253 638,249 628,244"/><polygon points="332,150 340,145 352,146 362,150 369,158 368,168 360,176 348,178 338,172 332,162"/><polygon points="364,166 374,163 384,168 384,181 374,184 365,178"/><polygon points="381,150 392,146 403,146 416,151 430,159 440,166 455,174 468,182 477,190 477,196 463,196 447,194 430,190 410,187 392,183 384,176 380,164"/><polygon points="440,201 458,197 479,199 496,210 511,223 503,229 486,236 464,231 445,225 438,214"/><polygon points="501,231 522,229 548,236 557,242 548,249 531,249 511,244 501,238"/><polygon points="548,257 569,255 587,264 589,270 576,274 559,270 548,264"/><polygon points="432,362 442,358 452,359 458,364 459,368 430,368"/></g>
<g filter="url(#b2)" fill="none" stroke="#241c16" stroke-width="1.8" opacity="0.75"><polyline points="520,60 540,110 530,150 560,190"/><polyline points="560,140 590,150 610,135"/><polyline points="455,60 500,90 520,85"/><polyline points="396,120 410,136 440,158 470,178 500,194"/><polyline points="427,56 442,95 468,140 515,196"/><polyline points="442,95 480,96 520,110 560,140 600,170 630,200"/><polyline points="470,48 478,80 470,110 480,150"/></g>
</g></svg>
<div class="a" style="left:726px;top:653px;width:125px;height:35px;box-sizing:border-box;border:1px solid rgba(235,235,235,0.9);border-radius:6px;background:rgba(38,38,38,0.9)"></div>
<span class="t" style="left:739.61px;top:660.97px;font-size:14.5px;transform:scaleX(0.9700);color:#fff;">Preview 2 of 10</span>
<div class="a" style="left:738px;top:699px;width:50px;height:36px;background:#808080;border-radius:4px 0 0 4px"></div>
<div class="a" style="left:791px;top:699px;width:50px;height:36px;background:#808080;border-radius:0 4px 4px 0"></div>
<span class="t" style="left:757.14px;top:707.88px;font-size:16.5px;transform:scaleX(1.1446);color:#fff;">&lt;</span>
<span class="t" style="left:809.84px;top:707.88px;font-size:16.5px;transform:scaleX(1.1446);color:#fff;">&gt;</span>
<span class="t" style="left:19.65px;top:770.27px;font-size:14.5px;transform:scaleX(0.9445);font-weight:700;">Save As:</span>
<div class="a" style="left:88px;top:764px;width:1073px;height:32px;box-sizing:border-box;border:1px solid #abadb3;background:#fff"></div>
<span class="t" style="left:90.49px;top:770.27px;font-size:14.5px;transform:scaleX(0.9442);">C:\Users\Vince\Videos\Sample 1280X720.mp4</span>
<div class="btn" style="left:1174px;top:766px;width:71px;height:29px"></div>
<span class="t" style="left:1184.45px;top:770.27px;font-size:14.5px;transform:scaleX(0.9474);font-weight:700;">Browse</span>
<span class="t" style="left:12.81px;top:826.80px;font-size:15px;transform:scaleX(0.9519);">Ready</span>
<span class="t" style="left:1060.40px;top:826.80px;font-size:15px;transform:scaleX(0.9846);font-weight:700;">When Done:</span>
<span class="t" style="left:1155.91px;top:826.80px;font-size:15px;transform:scaleX(1.0345);">Do nothing</span>
<svg style="left:1234px;top:834.5px" width="10" height="5" viewBox="0 0 10 5"><path d="M0 0 H10 L5.0 5 Z" fill="#333"/></svg>
</body></html>
